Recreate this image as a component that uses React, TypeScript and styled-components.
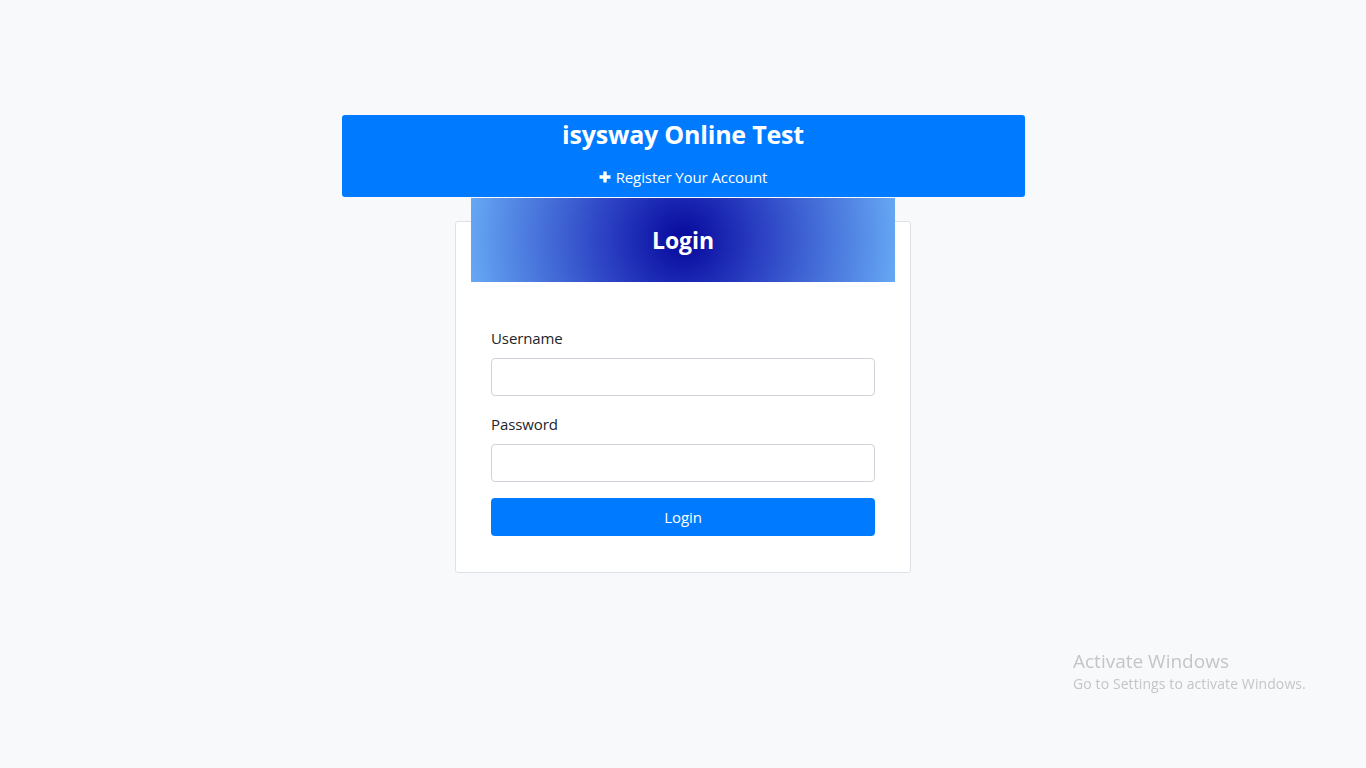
import React from "react";
import styled, { createGlobalStyle } from "styled-components";

const Global = createGlobalStyle`
  html, body { margin: 0; padding: 0; }
  body {
    background: #f8f9fa;
    font-family: "Open Sans", "Noto Sans", sans-serif;
    color: #212529;
    min-height: 768px;
  }
  * { box-sizing: border-box; }
`;

const Page = styled.div`
  display: flex;
  flex-direction: column;
  align-items: center;
  padding-top: 115px;
`;

const Banner = styled.div`
  width: 683px;
  background: #007bff;
  border-radius: 3px;
  color: #fff;
  text-align: center;
  padding: 2px 0 8px;
`;

const Title = styled.h3`
  margin: 0;
  font-size: 25px;
  font-weight: 700;
  line-height: 34px;
  letter-spacing: -0.2px;
`;

const RegisterLink = styled.a`
  display: inline-flex;
  align-items: center;
  gap: 5px;
  margin-top: 14px;
  font-size: 15px;
  line-height: 24px;
  color: #fff;
  text-decoration: none;
  letter-spacing: -0.1px;
`;

const Card = styled.div`
  width: 456px;
  margin-top: 24px;
  background: #fff;
  border: 1px solid #dee2e6;
  border-radius: 3px;
  padding: 0 15px 36px;
`;

const CardHead = styled.div`
  margin-top: -24px;
  height: 84px;
  display: flex;
  align-items: center;
  justify-content: center;
  background: radial-gradient(circle farthest-corner at center, #06089c 0%, #2a3fc2 35%, #66a8f4 100%);
`;

const HeadTitle = styled.h4`
  margin: 0;
  color: #fff;
  font-size: 23px;
  font-weight: 700;
  letter-spacing: -0.1px;
`;

const Form = styled.form`
  padding: 44px 20px 0;
  display: flex;
  flex-direction: column;
`;

const Label = styled.label`
  font-size: 15px;
  line-height: 24px;
  margin-bottom: 8px;
  color: #212529;
  letter-spacing: -0.1px;
`;

const Input = styled.input`
  height: 38px;
  border: 1px solid #ced4da;
  border-radius: 4px;
  background: #fff;
  margin-bottom: 16px;
  padding: 6px 12px;
  font-size: 16px;
  outline: none;
`;

const Button = styled.button`
  height: 38px;
  border: none;
  border-radius: 4px;
  background: #007bff;
  color: #fff;
  font-family: inherit;
  font-size: 15px;
  letter-spacing: -0.1px;
  cursor: pointer;
`;

const Watermark = styled.div`
  position: fixed;
  left: 1073px;
  top: 650px;
  color: #c3c5c7;
  line-height: 1.2;
`;

const WmTitle = styled.div`
  font-size: 19px;
`;

const WmSub = styled.div`
  font-size: 14px;
  margin-top: 3px;
  letter-spacing: 0.1px;
`;

const PlusIcon = () => (
  <svg width="12" height="12" viewBox="0 0 12 12" aria-hidden="true">
    <path d="M4.3 0.5h3.4v3.8h3.8v3.4H7.7v3.8H4.3V7.7H0.5V4.3h3.8z" fill="#fff" />
  </svg>
);

export default function App() {
  return (
    <>
      <Global />
      <Page>
        <Banner>
          <Title>isysway Online Test</Title>
          <RegisterLink href="#">
            <PlusIcon />
            Register Your Account
          </RegisterLink>
        </Banner>
        <Card>
          <CardHead>
            <HeadTitle>Login</HeadTitle>
          </CardHead>
          <Form onSubmit={(e) => e.preventDefault()}>
            <Label htmlFor="username">Username</Label>
            <Input id="username" type="text" />
            <Label htmlFor="password">Password</Label>
            <Input id="password" type="password" />
            <Button type="submit">Login</Button>
          </Form>
        </Card>
      </Page>
      <Watermark>
        <WmTitle>Activate Windows</WmTitle>
        <WmSub>Go to Settings to activate Windows.</WmSub>
      </Watermark>
    </>
  );
}
